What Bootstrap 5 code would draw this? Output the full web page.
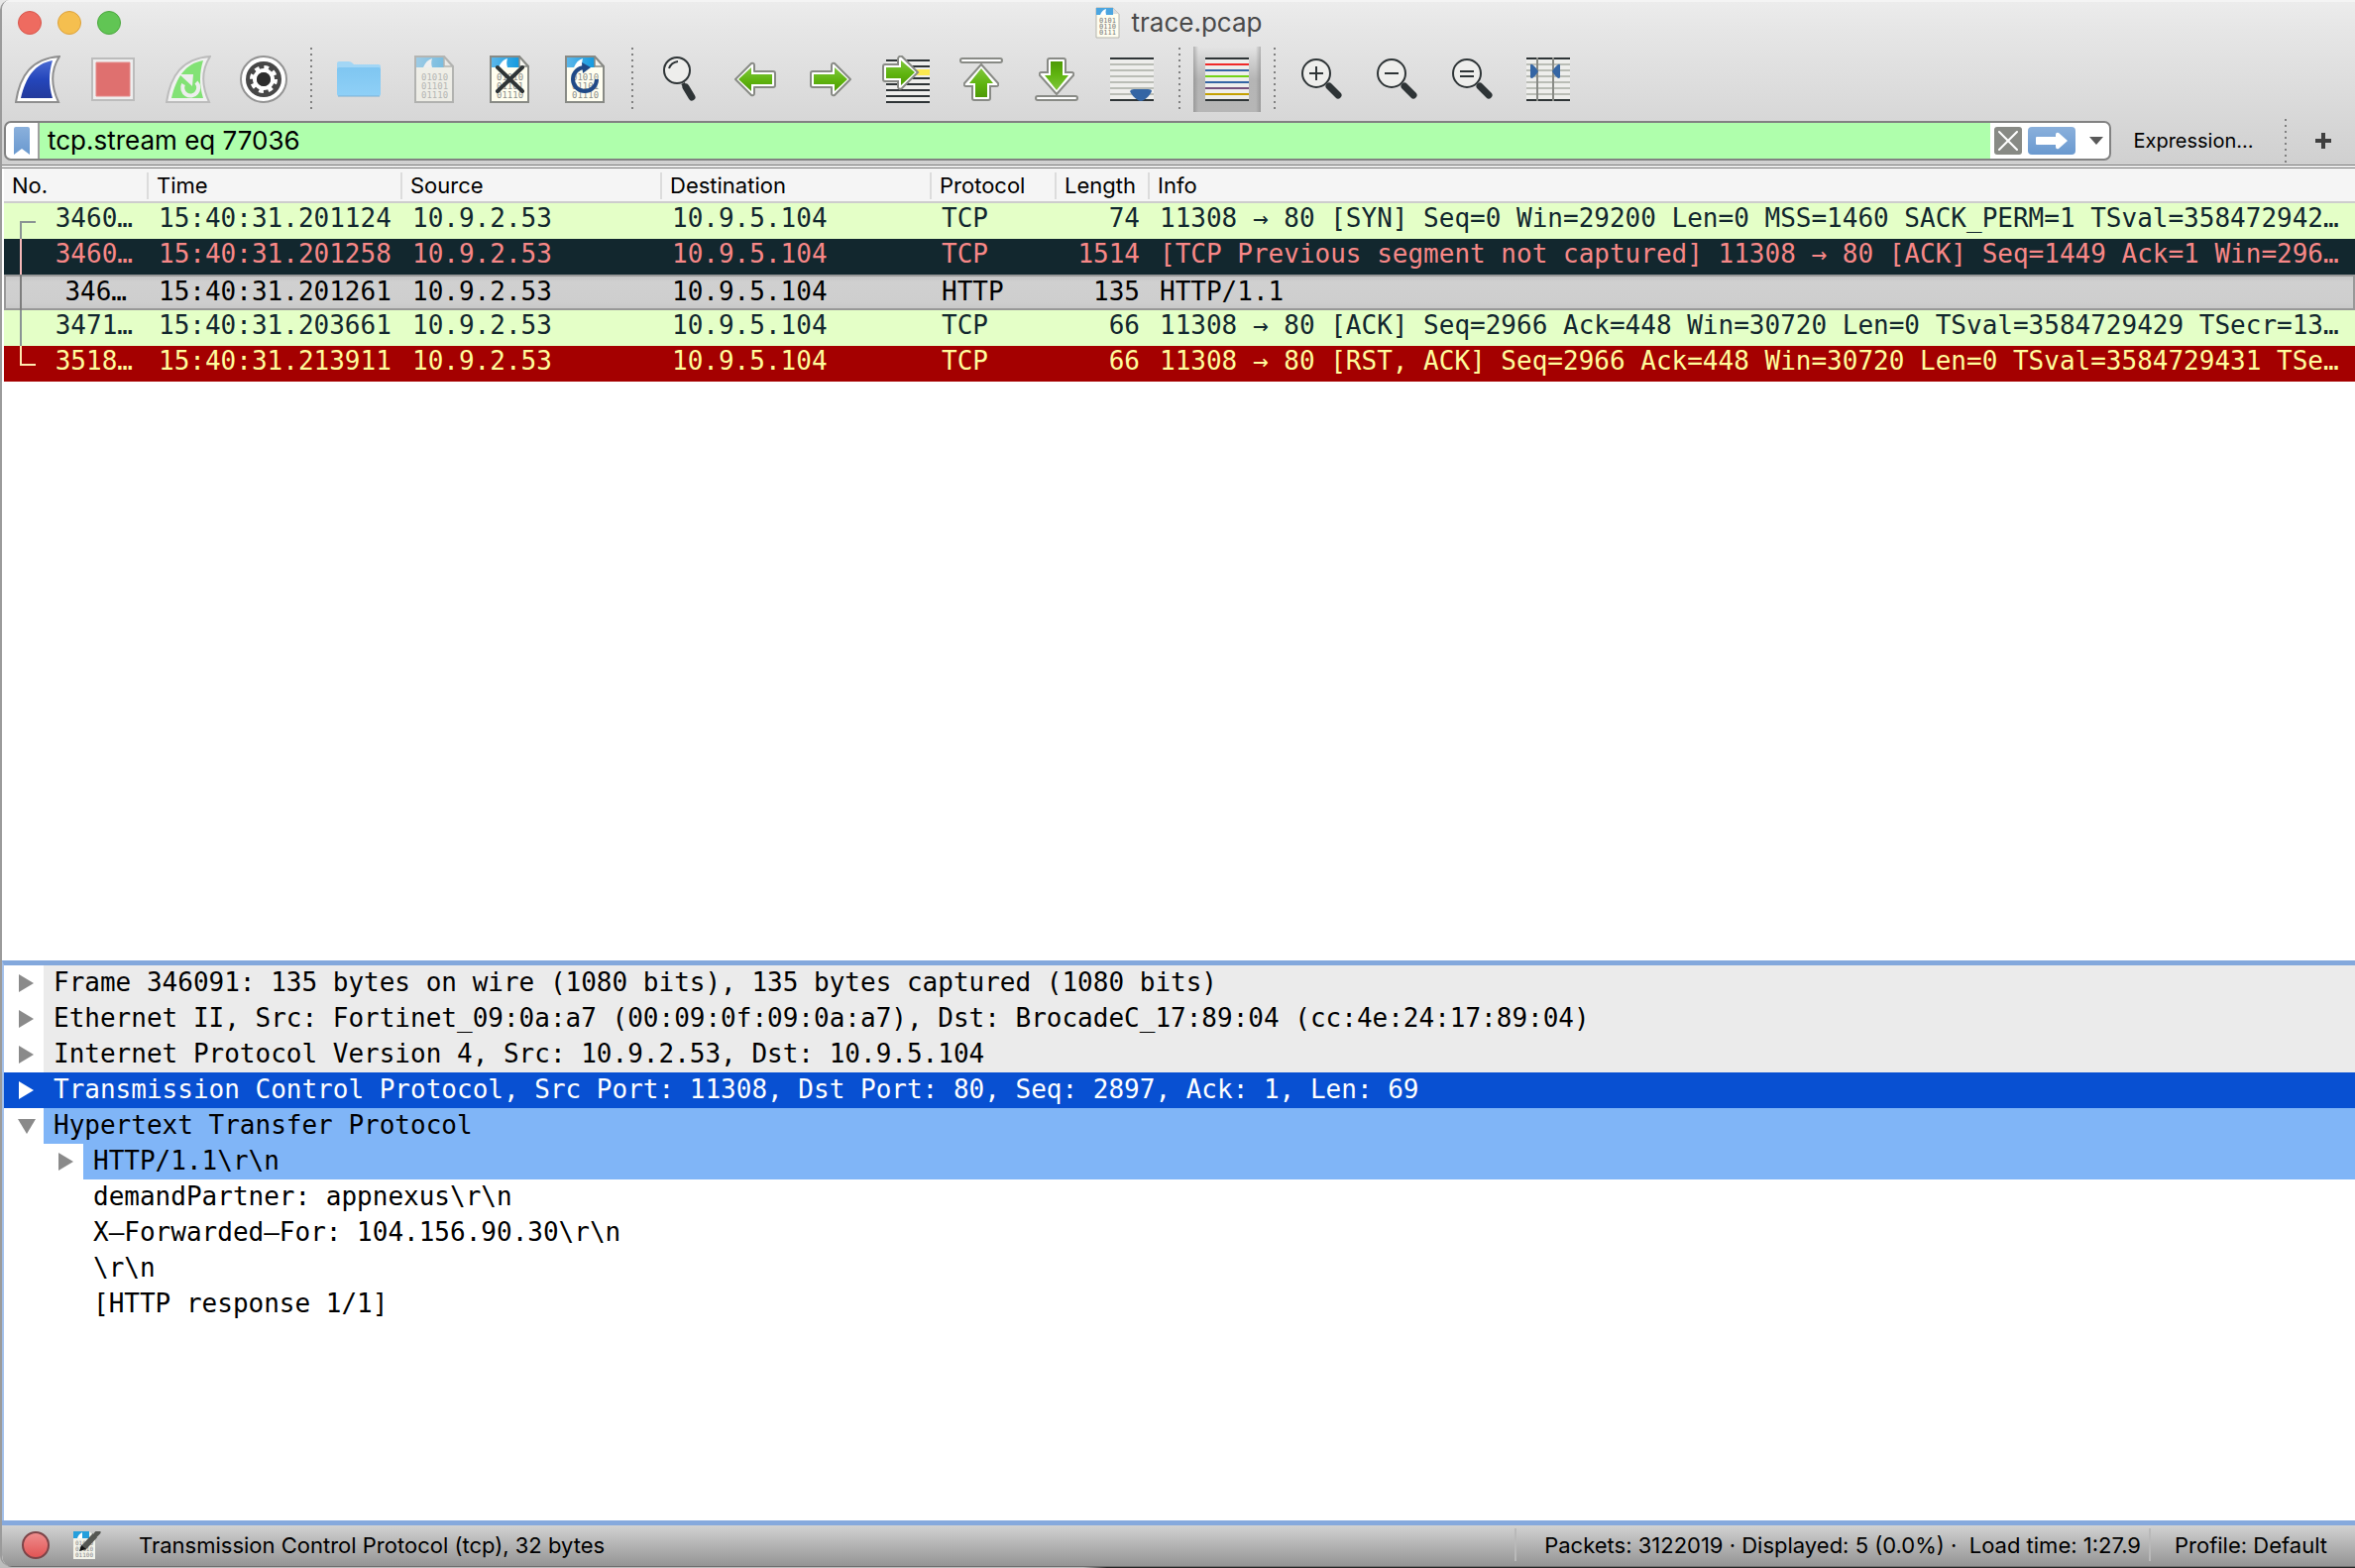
<!DOCTYPE html>
<html lang="en">
<head>
<meta charset="utf-8">
<meta name="viewport" content="width=device-width, initial-scale=1">
<title>trace.pcap</title>
<link href="https://cdn.jsdelivr.net/npm/bootstrap@5.3.0/dist/css/bootstrap.min.css" rel="stylesheet">
<style>
  :root { --ui: "Inter", "Roboto", sans-serif; --fixed: "DejaVu Sans Mono", "Liberation Mono", monospace; }
  body { font-family: var(--ui); font-size: 22px; line-height: 30px; color: #000; background: #e8e8e8 linear-gradient(90deg, #bdbdbd 46%, #262626 47%) bottom / 100% 20px no-repeat; }
  button { font: inherit; color: inherit; background: none; border: 0; padding: 0; }
  svg { display: block; flex: none; }
  .app-window { border-left: 2px solid #9b9b9b; border-radius: 10px 0 0 12px; background: #fff; overflow: hidden; margin-bottom: 1px; }
  .app-chrome { background: linear-gradient(#ececec, #e6e6e6 28px, #d0d0d0); border-top: 2px solid #f4f4f4; border-bottom: 4px double #7f7f7f; }
  .title-row { height: 44px; padding: 0 16px 2px; }
  .light { width: 24px; height: 24px; border-radius: 50%; border: 1px solid; }
  .light-close { background: #ee6b60; border-color: #d8564c; }
  .light-min { background: #f5bf4f; border-color: #dda23b; }
  .light-zoom { background: #61c554; border-color: #4ba73e; }
  .doc-title { font-size: 26px; color: #4a4a4a; gap: 12px; }
  .side { flex: 1 1 0; }
  .tool-row { height: 68px; }
  .tool { width: 76px; height: 68px; display: flex; align-items: center; justify-content: center; }
  .tool-first { width: 74px; padding-right: 2px; }
  .tool-on { width: 68px; margin: 0 4px; height: 66px; background: linear-gradient(90deg, #7777, #9990 5px, #9990 63px, #7777), linear-gradient(#e4e4e4, #b5b5b5 50%, #b6b6b6); }
  .dots { width: 20px; height: 64px; background: repeating-linear-gradient(#808080 0 2px, transparent 2px 6px) center / 2px 100% no-repeat; }
  .dots-filter { height: 44px; margin: -2px 0; }
  .filter-row { padding: 8px 0 4px 2px; }
  .filter-box { height: 40px; border: 2px solid #828282; border-radius: 7px; background: #fff; overflow: hidden; }
  .filter-mark { width: 34px; border-right: 2px solid #a0a0a0; display: flex; justify-content: center; align-items: center; }
  .filter-text { border: 0; outline: 0; padding: 0 8px; background: #afffac; font-size: 26px; color: #000; min-width: 0; }
  .filter-act { width: 120px; padding-left: 4px; gap: 6px; }
  .expr { width: 166px; font-size: 20px; }
  .filter-add { padding: 0 24px 0 20px; }
  .packet-pane { flex: 800 1 0; min-height: 0; overflow: hidden; padding-left: 2px; }
  .detail-pane { flex: 560 1 0; min-height: 0; overflow: hidden; border-top: 5px solid #83a8dc; border-left: 2px solid #a3c0ea; }
  .packets { width: 100%; table-layout: fixed; border-collapse: separate; border-spacing: 0; }
  .packets th { font-weight: 400; background: #f5f5f5; border-bottom: 2px solid #cdcdcd; padding: 4px 0 2px; white-space: nowrap; }
  .packets th span { display: block; height: 27px; line-height: 27px; border-right: 2px solid #dcdcdc; padding-left: 8px; }
  .packets th:last-child span { border: 0; }
  .packets td { font-family: var(--fixed); font-size: 26px; line-height: 30px; height: 36px; padding: 0 8px 6px 10px; white-space: nowrap; overflow: hidden; vertical-align: top; }
  .packets td:first-child { padding: 0 16px 0 16px; }
  .packets td.len { padding-left: 0; padding-right: 10px; text-align: right; }
  .packets td:last-child { padding-right: 0; }
  .p-tcp { background: #e4ffc7; color: #12272e; }
  .p-bad { background: #12272e; color: #f78787; }
  .p-rst { background: #a40000; color: #fffc9c; }
  .p-tcp svg { color: #8a9494; } .p-bad svg { color: #f7b9b9; } .p-rst svg { color: #ffe9b0; } .p-cur svg { color: #7d7d7d; }
  .p-cur td { background: linear-gradient(#c4c4c4, #d0d0d0 8px, #cecece 28px, #c6c6c6); box-shadow: inset 0 2px #989898, inset 0 -2px #989898; padding-top: 2px; padding-bottom: 4px; }
  .p-cur td:first-child { padding-top: 0; padding-right: 22px; box-shadow: inset 2px 2px #989898, inset 0 -2px #989898; }
  .p-cur td:first-child span { padding-top: 2px; }
  .p-cur td:last-child { box-shadow: inset -2px 2px #989898, inset 0 -2px #989898; }
  .tree { font-family: var(--fixed); font-size: 26px; line-height: 34px; }
  .tree-row { display: flex; height: 36px; white-space: pre; }
  .tree-row button, .twist { width: 40px; display: flex; align-items: center; justify-content: center; padding-left: 5px; color: #8a8a8a; }
  .tree-row .tree-text { flex: 1; padding: 0 0 2px 10px; }
  .tree .tree .tree-row { padding-left: 40px; }
  .tone-proto { background: #ebebeb; }
  .tone-link { background: #80b5f7; }
  .tree .row-sel { background: #0850d2; color: #fff; }
  .tree .row-sel button { color: #fff; }
  .status { height: 47px; border-top: 5px solid #86a9dd; background: linear-gradient(#d2d2d2, #949494); border-bottom: 1px solid #6e6e6e; padding: 0 28px 2px 20px; }
  .status-msg { margin-left: 38px; }
  .status-sep { width: 2px; height: 33px; background: #b9b9b9; }
  .status-sep-wide { margin-right: 28px; }
  .status-dot { width: 28px; height: 28px; border-radius: 50%; border: 2px solid #7c4448; background: linear-gradient(#ee8d8d, #e25555); }
  .bits { font-family: var(--fixed); font-size: 9px; fill: #8d8f8b; }
</style>
<script src="https://cdn.jsdelivr.net/npm/bootstrap@5.3.0/dist/js/bootstrap.bundle.min.js"></script>
</head>
<body>
<svg width="0" height="0" class="position-absolute" aria-hidden="true">
  <defs>
    <linearGradient id="gBlue" x1="0" y1="0" x2="0" y2="1"><stop offset="0" stop-color="#4a6ad2"/><stop offset=".5" stop-color="#2446bb"/><stop offset="1" stop-color="#233a9c"/></linearGradient>
    <linearGradient id="gGreen" x1="0" y1="0" x2="0" y2="1"><stop offset="0" stop-color="#7fc63c"/><stop offset=".55" stop-color="#5fb40f"/><stop offset="1" stop-color="#4e9a06"/></linearGradient>
    <linearGradient id="gSky" x1="0" y1="0" x2="1" y2="0"><stop offset="0" stop-color="#5cb7ea"/><stop offset="1" stop-color="#139adf"/></linearGradient>
    <linearGradient id="gFolder" x1="0" y1="0" x2="0" y2="1"><stop offset="0" stop-color="#7fc6f1"/><stop offset="1" stop-color="#8fd0f7"/></linearGradient>
    <linearGradient id="gMark" x1="0" y1="0" x2="0" y2="1"><stop offset="0" stop-color="#8ab0dc"/><stop offset="1" stop-color="#6a99cf"/></linearGradient>
    <symbol id="iDoc" viewBox="0 0 40 48">
      <path d="M1 1H30L39 11V47H1Z" fill="#fffef0"/>
      <path d="M2 2H30V12H2Z" fill="url(#gSky)"/>
      <path d="M9 12C11 7 14 4 18 3C17 6 17 9 18 12Z" fill="#fff"/>
      <path d="M30 1V11H39Z" fill="#f4f4ee" stroke="#888a85" stroke-width="1.500"/>
      <path d="M1 1H30L39 11V47H1Z" fill="none" stroke="#888a85" stroke-width="2"/>
      <g class="bits"><text x="7" y="25">01010</text><text x="7" y="34">01101</text><text x="7" y="43">01110</text></g>
    </symbol>
    <symbol id="iArrow" viewBox="0 0 44 36">
      <path d="M2 18L18 2Q21 1 21 4V10H40Q42 10 42 12V24Q42 26 40 26H21V32Q21 35 18 34Z" fill="#fff" stroke="#888a85" stroke-width="2" stroke-linejoin="round"/>
      <path d="M5 18L18 6V13H39V23H18V30Z" fill="url(#gGreen)"/>
    </symbol>
    <symbol id="iUp" viewBox="0 0 36 38">
      <path d="M18 1L35 20Q36 23 33 23H27V35Q27 37 25 37H11Q9 37 9 35V23H3Q0 23 1 20Z" fill="#fff" stroke="#888a85" stroke-width="2"/>
      <path d="M18 5L30 20H24V34H12V20H6Z" fill="url(#gGreen)"/>
    </symbol>
    <symbol id="iLens" viewBox="0 0 42 42">
      <path d="M28 28L37 37" stroke="#2e3436" stroke-width="7" stroke-linecap="round"/>
      <circle cx="15" cy="15" r="14" fill="#eeeeec" stroke="#2e3436" stroke-width="2"/>
    </symbol>
  </defs>
</svg>

<div class="vh-100 d-flex flex-column overflow-hidden">
<div class="app-window flex-grow-1 d-flex flex-column">
  <header class="app-chrome">
    <div class="title-row d-flex align-items-center">
      <div class="side d-flex gap-3">
        <button class="light light-close" aria-label="Close"></button>
        <button class="light light-min" aria-label="Minimize"></button>
        <button class="light light-zoom" aria-label="Zoom"></button>
      </div>
      <div class="doc-title d-flex align-items-center">
        <svg width="25" height="32" viewBox="0 0 25 32"><path d="M1 1H18L24 7V31H1Z" fill="#fffef0" stroke="#b5b5ad"/><path d="M1 1H18V8H1Z" fill="#4ba5e0"/><path d="M5 8Q7 3 11 2Q10 5 11 8Z" fill="#fff"/><path d="M18 1V7H24Z" fill="#ddd"/><g fill="#777" font-family="DejaVu Sans Mono" font-size="7"><text x="4" y="16">0101</text><text x="4" y="22">0110</text><text x="4" y="28">0111</text></g></svg>
        <span>trace.pcap</span>
      </div>
      <div class="side"></div>
    </div>

    <div class="tool-row d-flex align-items-center" role="toolbar" aria-label="Main toolbar">
      <button class="tool tool-first" aria-label="Start capture"><svg width="46" height="48" viewBox="0 0 46 48"><path d="M1 47C5 20 17 3 45 1C36 15 36 30 44 47Z" fill="#fff" stroke="#8f8f8f" stroke-width="2"/><path d="M6 43C11 22 20 8 38 5C34 18 34 30 38 43Z" fill="url(#gBlue)"/></svg></button>
      <button class="tool" aria-label="Stop capture"><svg width="44" height="44" viewBox="0 0 44 44"><path d="M1 1H43V43H1Z" fill="#eee" stroke="#bcbcbc" stroke-width="2"/><path d="M5 5H39V39H5Z" fill="#df706f" stroke="#e58a8a"/></svg></button>
      <button class="tool" aria-label="Restart capture"><svg width="46" height="48" viewBox="0 0 46 48"><path d="M1 47C5 20 17 3 45 1C36 15 36 30 44 47Z" fill="#f1f1f1" stroke="#bcbcbc" stroke-width="2"/><path d="M6 43C11 22 20 8 38 5C34 18 34 30 38 43Z" fill="#82e275"/><path d="M31 27A8 8 0 1 1 18 29" fill="none" stroke="#eee" stroke-width="4"/><path d="M14 19H28L27 31Z" fill="#eee"/></svg></button>
      <button class="tool" aria-label="Capture options"><svg width="48" height="48" viewBox="0 0 48 48"><circle cx="24" cy="24" r="23" fill="#fff" stroke="#939393" stroke-width="2"/><circle cx="24" cy="24" r="18" fill="#474747"/><circle cx="24" cy="24" r="9" fill="none" stroke="#fff" stroke-width="4"/><circle cx="24" cy="24" r="12" fill="none" stroke="#fff" stroke-width="4" stroke-dasharray="4.700 4.725"/><circle cx="24" cy="24" r="7" fill="#2d2d2d"/></svg></button>
      <span class="dots"></span>
      <button class="tool" aria-label="Open"><svg width="46" height="36" viewBox="0 0 46 36"><path d="M1 6V2Q1 0 3 0H13Q15 0 17 2L18 3H43Q45 3 45 5V10H1Z" fill="#a2d6f5"/><path d="M1 8Q1 6 3 6H43Q45 6 45 8V33Q45 35 43 35H3Q1 35 1 33Z" fill="url(#gFolder)"/><path d="M2 35H44" stroke="#7ab1d4" stroke-width="1"/></svg></button>
      <button class="tool" aria-label="Save"><svg width="40" height="48" opacity=".5"><use href="#iDoc"/></svg></button>
      <button class="tool" aria-label="Close file"><svg width="40" height="48"><use href="#iDoc"/><path d="M8 12L33 36M33 12L8 36" stroke="#2e3436" stroke-width="4" stroke-linecap="round"/></svg></button>
      <button class="tool" aria-label="Reload"><svg width="40" height="48"><use href="#iDoc"/><path d="M32 24A12 12 0 1 1 20 12" fill="none" stroke="#204a87" stroke-width="4"/><path d="M17 7L26 12L18 18Z" fill="#204a87"/></svg></button>
      <span class="dots"></span>
      <button class="tool" aria-label="Find packet"><svg width="34" height="46" viewBox="0 0 34 46"><path d="M20 27L23 32" stroke="#2e3436" stroke-width="4"/><path d="M23 31L29 41" stroke="#2e3436" stroke-width="7" stroke-linecap="round"/><circle cx="14" cy="14" r="13" fill="#eeeeec" stroke="#2e3436" stroke-width="2"/><path d="M6 12Q8 6 15 5" fill="none" stroke="#2e3436" stroke-width="2"/></svg></button>
      <button class="tool" aria-label="Previous packet"><svg width="44" height="36"><use href="#iArrow"/></svg></button>
      <button class="tool" aria-label="Next packet"><svg width="44" height="36"><use href="#iArrow" transform="matrix(-1 0 0 1 44 0)"/></svg></button>
      <button class="tool" aria-label="Go to packet"><svg width="48" height="48" viewBox="0 0 48 48"><path d="M4 4H48V48H4Z" fill="#eeeeec"/><path d="M4 5H48M4 11H48M4 23H48M4 29H48M4 35H48M4 41H48M4 47H48" stroke="#2e3436" stroke-width="2"/><path d="M30 14H48V20H30Z" fill="#fce94f"/><path d="M36 17L20 1Q16 0 16 4V9H3Q1 9 1 11V24Q1 26 3 26H16V32Q17 35 20 33Z" fill="#fff" stroke="#888a85" stroke-width="2"/><path d="M33 17L19 5V12H4V23H19V30Z" fill="url(#gGreen)"/></svg></button>
      <button class="tool" aria-label="First packet"><svg width="44" height="44" viewBox="0 0 44 44"><rect x="1" y="1" width="42" height="4" rx="2" fill="#fff" stroke="#888a85" stroke-width="2"/><use href="#iUp" x="4" y="6" width="36" height="38"/></svg></button>
      <button class="tool" aria-label="Last packet"><svg width="44" height="44" viewBox="0 0 44 44"><rect x="1" y="39" width="42" height="4" rx="2" fill="#fff" stroke="#888a85" stroke-width="2"/><g transform="matrix(1 0 0 -1 0 38)"><use href="#iUp" x="4" y="0" width="36" height="38"/></g></svg></button>
      <button class="tool" aria-label="Auto scroll"><svg width="44" height="44" viewBox="0 0 44 44"><path d="M0 0H44V44H0Z" fill="#eeeeec"/><path d="M0 7H44M0 13H44M0 19H44M0 25H44M0 31H44M0 37H44" stroke="#babdb6" stroke-width="2"/><path d="M0 1H44M0 43H44" stroke="#2e3436" stroke-width="2"/><path d="M20 34Q21 32 24 32H38Q42 32 42 34Q40 39 34 43Q31 45 28 43Q22 39 20 34Z" fill="#3465a4"/></svg></button>
      <span class="dots"></span>
      <button class="tool tool-on" aria-label="Colorize" aria-pressed="true"><svg width="44" height="44" viewBox="0 0 44 44"><path d="M0 0H44V44H0Z" fill="#eeeeec"/><g stroke-width="2"><path d="M0 1H44M0 43H44" stroke="#2e3436"/><path d="M0 7H44" stroke="#ef2929"/><path d="M0 13H44M0 25H44" stroke="#3465a4"/><path d="M0 19H44" stroke="#73d216"/><path d="M0 31H44" stroke="#75507b"/><path d="M0 37H44" stroke="#c4a000"/></g></svg></button>
      <span class="dots"></span>
      <button class="tool" aria-label="Zoom in"><svg width="42" height="42"><use href="#iLens"/><path d="M8 15H22M15 8V22" stroke="#2e3436" stroke-width="2"/></svg></button>
      <button class="tool" aria-label="Zoom out"><svg width="42" height="42"><use href="#iLens"/><path d="M8 15H22" stroke="#2e3436" stroke-width="2"/></svg></button>
      <button class="tool" aria-label="Normal size"><svg width="42" height="42"><use href="#iLens"/><path d="M8 13H22M8 18H22" stroke="#2e3436" stroke-width="2"/></svg></button>
      <button class="tool" aria-label="Resize columns"><svg width="44" height="44" viewBox="0 0 44 44"><path d="M0 0H44V44H0Z" fill="#eeeeec"/><path d="M0 7H44M0 13H44M0 19H44M0 25H44M0 31H44M0 37H44" stroke="#babdb6" stroke-width="2"/><path d="M0 1H44M0 43H44" stroke="#2e3436" stroke-width="2"/><path d="M11 0V44M27 0V44" stroke="#888a85" stroke-width="2"/><path d="M4 8Q4 6 6 7Q10 10 12 14Q10 18 6 21Q4 21 4 20ZM34 8Q34 6 32 7Q28 10 26 14Q28 18 32 21Q34 21 34 20Z" fill="#3465a4"/></svg></button>
    </div>

    <form class="filter-row d-flex align-items-center" onsubmit="return false">
      <div class="filter-box d-flex flex-grow-1">
        <button type="button" class="filter-mark" aria-label="Filter bookmarks"><svg width="16" height="28" viewBox="0 0 16 28"><path d="M0 2Q0 0 2 0H14Q16 0 16 2V28L8 22L0 28Z" fill="url(#gMark)"/></svg></button>
        <input class="filter-text flex-grow-1" type="text" value="tcp.stream eq 77036" aria-label="Display filter" spellcheck="false">
        <div class="filter-act d-flex align-items-center">
          <button type="button" aria-label="Clear filter"><svg width="28" height="28" viewBox="0 0 28 28"><rect width="28" height="28" rx="3" fill="#888a85"/><path d="M5 5L23 23M23 5L5 23" stroke="#fff" stroke-width="2" stroke-linecap="round"/></svg></button>
          <button type="submit" aria-label="Apply filter"><svg width="48" height="28" viewBox="0 0 48 28"><rect width="48" height="28" rx="4" fill="url(#gMark)"/><path d="M9 10H28V8Q28 5 31 6L40 14L31 22Q28 23 28 20V18H9Q8 18 8 17V11Q8 10 9 10Z" fill="#fff"/></svg></button>
          <button type="button" class="ms-2" aria-label="Recent filters"><svg width="15" height="8" viewBox="0 0 15 8"><path d="M0 0H14L7 8Z" fill="#595959"/></svg></button>
        </div>
      </div>
      <button type="button" class="expr">Expression…</button>
      <span class="dots dots-filter"></span>
      <button type="button" class="filter-add" aria-label="Add filter button"><svg width="16" height="16" viewBox="0 0 16 16"><path d="M8 0V16M0 8H16" stroke="#404040" stroke-width="4"/></svg></button>
    </form>
  </header>

  <main class="flex-grow-1 d-flex flex-column">
    <section class="packet-pane">
      <table class="packets">
        <colgroup><col style="width:146px"><col style="width:256px"><col style="width:262px"><col style="width:272px"><col style="width:126px"><col style="width:94px"><col></colgroup>
        <thead><tr><th><span>No.</span></th><th><span>Time</span></th><th><span>Source</span></th><th><span>Destination</span></th><th><span>Protocol</span></th><th><span>Length</span></th><th><span>Info</span></th></tr></thead>
        <tbody>
          <tr class="p-tcp"><td><div class="d-flex justify-content-between"><svg width="16" height="36"><path d="M16 19H1V36" fill="none" stroke="currentColor" stroke-width="2"/></svg><span>3460…</span></div></td><td>15:40:31.201124</td><td>10.9.2.53</td><td>10.9.5.104</td><td>TCP</td><td class="len">74</td><td>11308 → 80 [SYN] Seq=0 Win=29200 Len=0 MSS=1460 SACK_PERM=1 TSval=358472942…</td></tr>
          <tr class="p-bad"><td><div class="d-flex justify-content-between"><svg width="16" height="36"><path d="M1 0V36" stroke="currentColor" stroke-width="2"/></svg><span>3460…</span></div></td><td>15:40:31.201258</td><td>10.9.2.53</td><td>10.9.5.104</td><td>TCP</td><td class="len">1514</td><td>[TCP Previous segment not captured] 11308 → 80 [ACK] Seq=1449 Ack=1 Win=296…</td></tr>
          <tr class="p-cur" aria-selected="true"><td><div class="d-flex justify-content-between"><svg width="16" height="36"><path d="M1 0V36" stroke="currentColor" stroke-width="2"/></svg><span>346…</span></div></td><td>15:40:31.201261</td><td>10.9.2.53</td><td>10.9.5.104</td><td>HTTP</td><td class="len">135</td><td>HTTP/1.1</td></tr>
          <tr class="p-tcp"><td><div class="d-flex justify-content-between"><svg width="16" height="36"><path d="M1 0V36" stroke="currentColor" stroke-width="2"/></svg><span>3471…</span></div></td><td>15:40:31.203661</td><td>10.9.2.53</td><td>10.9.5.104</td><td>TCP</td><td class="len">66</td><td>11308 → 80 [ACK] Seq=2966 Ack=448 Win=30720 Len=0 TSval=3584729429 TSecr=13…</td></tr>
          <tr class="p-rst"><td><div class="d-flex justify-content-between"><svg width="16" height="36"><path d="M1 0V19H16" fill="none" stroke="currentColor" stroke-width="2"/></svg><span>3518…</span></div></td><td>15:40:31.213911</td><td>10.9.2.53</td><td>10.9.5.104</td><td>TCP</td><td class="len">66</td><td>11308 → 80 [RST, ACK] Seq=2966 Ack=448 Win=30720 Len=0 TSval=3584729431 TSe…</td></tr>
        </tbody>
      </table>
    </section>

    <section class="detail-pane">
      <ul class="tree list-unstyled mb-0">
        <li><div class="tree-row"><button aria-label="Expand"><svg width="15" height="18"><path d="M0 0L15 9L0 18Z" fill="currentColor"/></svg></button><span class="tree-text tone-proto">Frame 346091: 135 bytes on wire (1080 bits), 135 bytes captured (1080 bits)</span></div></li>
        <li><div class="tree-row"><button aria-label="Expand"><svg width="15" height="18"><path d="M0 0L15 9L0 18Z" fill="currentColor"/></svg></button><span class="tree-text tone-proto">Ethernet II, Src: Fortinet_09:0a:a7 (00:09:0f:09:0a:a7), Dst: BrocadeC_17:89:04 (cc:4e:24:17:89:04)</span></div></li>
        <li><div class="tree-row"><button aria-label="Expand"><svg width="15" height="18"><path d="M0 0L15 9L0 18Z" fill="currentColor"/></svg></button><span class="tree-text tone-proto">Internet Protocol Version 4, Src: 10.9.2.53, Dst: 10.9.5.104</span></div></li>
        <li><div class="tree-row row-sel"><button aria-label="Expand"><svg width="15" height="18"><path d="M0 0L15 9L0 18Z" fill="currentColor"/></svg></button><span class="tree-text">Transmission Control Protocol, Src Port: 11308, Dst Port: 80, Seq: 2897, Ack: 1, Len: 69</span></div></li>
        <li><div class="tree-row"><button aria-label="Collapse"><svg width="18" height="15"><path d="M0 0H18L9 15Z" fill="currentColor"/></svg></button><span class="tree-text tone-link">Hypertext Transfer Protocol</span></div>
          <ul class="tree list-unstyled mb-0">
            <li><div class="tree-row"><button aria-label="Expand"><svg width="15" height="18"><path d="M0 0L15 9L0 18Z" fill="currentColor"/></svg></button><span class="tree-text tone-link">HTTP/1.1\r\n</span></div></li>
            <li><div class="tree-row"><span class="twist"></span><span class="tree-text">demandPartner: appnexus\r\n</span></div></li>
            <li><div class="tree-row"><span class="twist"></span><span class="tree-text">X–Forwarded–For: 104.156.90.30\r\n</span></div></li>
            <li><div class="tree-row"><span class="twist"></span><span class="tree-text">\r\n</span></div></li>
            <li><div class="tree-row"><span class="twist"></span><span class="tree-text">[HTTP response 1/1]</span></div></li>
          </ul>
        </li>
      </ul>
    </section>
  </main>

  <footer class="status d-flex align-items-center">
    <button class="status-dot" aria-label="Expert information"></button>
    <button class="ms-4" aria-label="Capture file comment"><svg width="28" height="28" viewBox="0 0 28 28"><path d="M0 0H16L22 6V28H0Z" fill="#f3f3ea"/><path d="M0 0H16V7H0Z" fill="#259fdc"/><path d="M4 7Q5 3 9 1V7Z" fill="#fff"/><g fill="#888" font-family="DejaVu Sans Mono" font-size="6"><text x="2" y="14">01010</text><text x="2" y="20">01110</text><text x="2" y="26">01100</text></g><path d="M10 17L22 4" stroke="#555753" stroke-width="6"/><path d="M23 3L25 1" stroke="#555753" stroke-width="5" stroke-linecap="round"/><path d="M6 20L8 14L13 18Z" fill="#111"/></svg></button>
    <span class="status-msg flex-grow-1">Transmission Control Protocol (tcp), 32 bytes</span>
    <span class="status-sep status-sep-wide"></span>
    <span class="text-nowrap">Packets: 3122019 · Displayed: 5 (0.0%) · &nbsp;Load time: 1:27.9</span>
    <span class="status-sep ms-2 me-4"></span>
    <span class="text-nowrap">Profile: Default</span>
  </footer>
</div>
</div>
</body>
</html>
